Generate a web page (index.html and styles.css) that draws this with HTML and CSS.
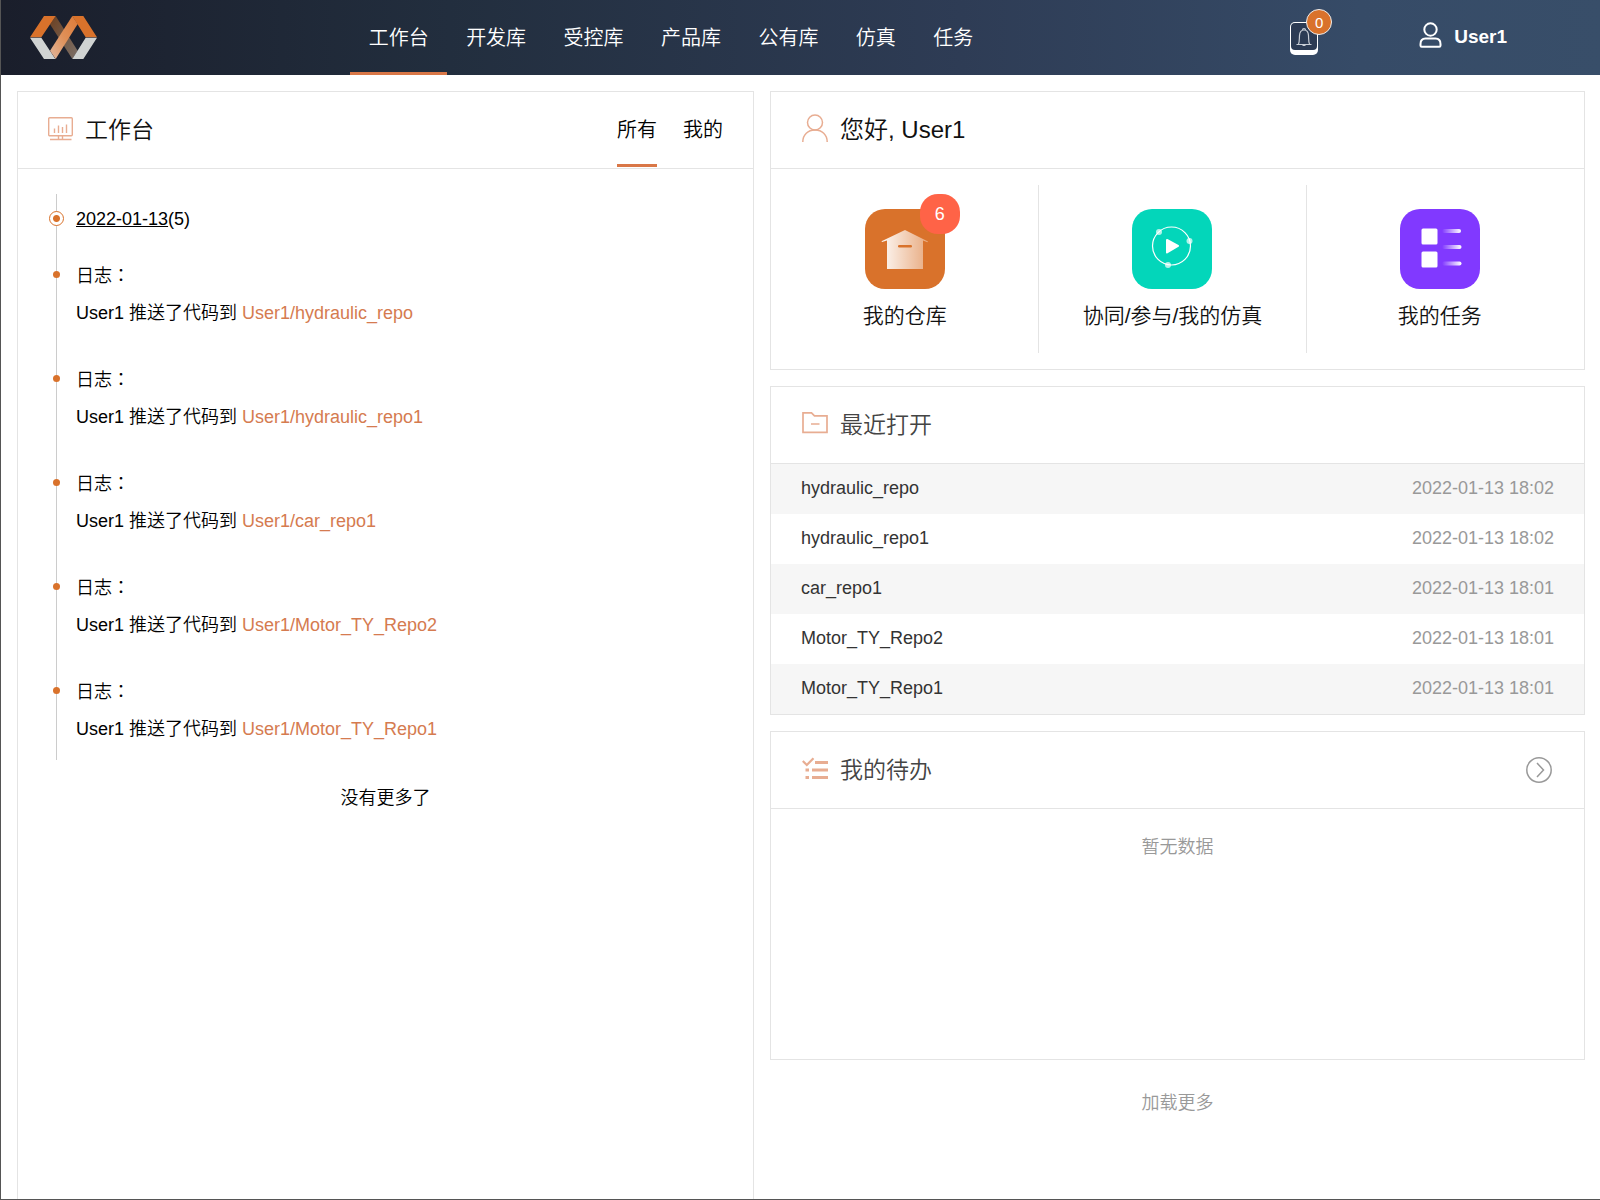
FILE: index.html
```html
<!DOCTYPE html>
<html lang="zh-CN">
<head>
<meta charset="utf-8">
<meta name="viewport" content="width=device-width, initial-scale=1">
<title>工作台</title>
<link rel="stylesheet" href="styles.css">
</head>
<body>
<header class="topbar">
  <a class="logo" href="#" aria-label="首页">
    <svg width="67" height="43" viewBox="90 48 201 129">
      <defs>
        <linearGradient id="band-dark" x1="0" y1="0" x2="1" y2="1"><stop offset="0" stop-color="#6b4022"/><stop offset="1" stop-color="#7c7068"/></linearGradient>
        <linearGradient id="band-light" x1="1" y1="0" x2="0" y2="1"><stop offset="0" stop-color="#dc7a38"/><stop offset=".5" stop-color="#e09058"/><stop offset="1" stop-color="#e0b79e"/></linearGradient>
      </defs>
      <path fill="url(#band-dark)" d="M167 48l66 104-16 25-67-104z"/>
      <path fill="#d9722b" d="M132 48h35l-43 64H90zM217 48h33l41 64h-34z"/>
      <path fill="#d0d3d2" d="M90 113h34l42 64h-34zM257 113h34l-41 64h-33z"/>
      <path fill="url(#band-light)" d="M217 48l16 24-66 105-17-25z"/>
    </svg>
  </a>
  <nav class="nav">
    <a class="nav-item active" href="#">工作台</a>
    <a class="nav-item" href="#">开发库</a>
    <a class="nav-item" href="#">受控库</a>
    <a class="nav-item" href="#">产品库</a>
    <a class="nav-item" href="#">公有库</a>
    <a class="nav-item" href="#">仿真</a>
    <a class="nav-item" href="#">任务</a>
  </nav>
  <div class="tools">
    <button class="bell" type="button" aria-label="通知">
      <svg width="28" height="33" viewBox="0 0 28 33">
        <rect width="28" height="33" rx="5" fill="#fff"/>
        <rect x="1" y="1" width="26" height="27" rx="4" fill="#2c3b54"/>
        <path fill="none" stroke="#c9ced6" stroke-width="1.2" d="M6.500 22.500h15M8.500 22c1-2 .8-5 1-8.500.2-3.500 2-5.500 4.500-5.500s4.300 2 4.500 5.500c.2 3.500 0 6.500 1 8.500M12.500 8c0-1 .5-1.500 1.500-1.500s1.500.5 1.500 1.500M12.500 23.500h3"/>
      </svg>
      <span class="bell-count">0</span>
    </button>
    <a class="user" href="#">
      <svg width="23" height="26" viewBox="0 0 23 26" fill="none" stroke="#fff" stroke-width="2">
        <circle cx="11.500" cy="7.500" r="6.200"/>
        <path d="M6.500 16.500h10c3.500 0 5 2.500 5 5.500v1.500q0 1.200-1.200 1.200H2.700q-1.200 0-1.200-1.200V22c0-3 1.500-5.500 5-5.500z"/>
      </svg>
      <span class="user-name">User1</span>
    </a>
  </div>
</header>

<main class="board">
  <section class="panel feed">
    <header class="panel-head">
      <svg class="head-icon" width="25" height="25" viewBox="0 0 25 25" fill="none" stroke="#e8ad92" stroke-width="1.400">
        <rect x=".7" y="1.700" width="23.600" height="18" rx="1"/>
        <path d="M6.500 12.500v4.500M10.500 9.500v7.500M14.500 11v6M18.500 8.500v8.500M10.500 20v3M14.500 20v3M2 23.500h21.500"/>
      </svg>
      <h2 class="title strong">工作台</h2>
      <div class="tabs">
        <button class="tab active" type="button">所有</button>
        <button class="tab" type="button">我的</button>
      </div>
    </header>
    <div class="timeline">
      <h3 class="day"><a href="#">2022-01-13</a>(5)</h3>
      <ol class="events">
        <li class="event"><p class="kind">日志：</p><p>User1 推送了代码到 <a href="#">User1/hydraulic_repo</a></p></li>
        <li class="event"><p class="kind">日志：</p><p>User1 推送了代码到 <a href="#">User1/hydraulic_repo1</a></p></li>
        <li class="event"><p class="kind">日志：</p><p>User1 推送了代码到 <a href="#">User1/car_repo1</a></p></li>
        <li class="event"><p class="kind">日志：</p><p>User1 推送了代码到 <a href="#">User1/Motor_TY_Repo2</a></p></li>
        <li class="event"><p class="kind">日志：</p><p>User1 推送了代码到 <a href="#">User1/Motor_TY_Repo1</a></p></li>
      </ol>
    </div>
    <p class="feed-end">没有更多了</p>
  </section>

  <div class="side">
    <section class="panel">
      <header class="panel-head">
        <svg class="head-icon" width="26" height="28" viewBox="0 0 26 28" fill="none" stroke="#e8ad92" stroke-width="1.500">
          <circle cx="13" cy="8.500" r="7.500"/>
          <path d="M.8 28C.8 20.500 6 16 13 16s12.200 4.500 12.200 12"/>
        </svg>
        <h2 class="title strong greeting">您好, User1</h2>
      </header>
      <div class="tiles">
        <a class="tile" href="#">
          <span class="tile-art">
            <svg width="80" height="80" viewBox="0 0 80 80">
              <defs><linearGradient id="house" x1="0" x2="1"><stop offset="0" stop-color="#fff" stop-opacity=".95"/><stop offset="1" stop-color="#fff" stop-opacity=".4"/></linearGradient></defs>
              <rect width="80" height="80" rx="20" fill="#d9722b"/>
              <path fill="url(#house)" d="M40 21l23 11.500-.5.800L58 31.500V60H22V31.500l-5 1.500-.5-.8z"/>
              <rect x="33" y="36" width="14" height="2.500" rx="1.200" fill="#d9722b"/>
            </svg>
            <span class="tile-count">6</span>
          </span>
          <span>我的仓库</span>
        </a>
        <a class="tile" href="#">
          <span class="tile-art">
            <svg width="80" height="80" viewBox="0 0 80 80">
              <rect width="80" height="80" rx="20" fill="#03d6ba"/>
              <circle cx="39.500" cy="37" r="19" fill="none" stroke="#fff" stroke-width="1.200"/>
              <g fill="#fff" fill-opacity=".7"><circle cx="27" cy="23" r="3"/><circle cx="57.500" cy="32" r="3"/><circle cx="36" cy="56" r="3"/></g>
              <path fill="#fff" stroke="#fff" stroke-width="2" stroke-linejoin="round" d="M35 31l11 6-11 6.500z"/>
            </svg>
          </span>
          <span>协同/参与/我的仿真</span>
        </a>
        <a class="tile" href="#">
          <span class="tile-art">
            <svg width="80" height="80" viewBox="0 0 80 80">
              <defs><linearGradient id="fade" x1="0" x2="1"><stop offset="0" stop-color="#fff" stop-opacity="0"/><stop offset="1" stop-color="#fff"/></linearGradient></defs>
              <rect width="80" height="80" rx="20" fill="#8139ff"/>
              <g fill="#fff"><rect x="21.500" y="19.500" width="16" height="16" rx="1.500"/><rect x="21.500" y="42.500" width="16" height="16" rx="1.500"/></g>
              <g fill="url(#fade)"><rect x="42" y="20" width="19" height="4" rx="2"/><rect x="42" y="36" width="19.500" height="4" rx="2"/><rect x="42" y="52.500" width="19.500" height="4" rx="2"/></g>
            </svg>
          </span>
          <span>我的任务</span>
        </a>
      </div>
    </section>

    <section class="panel">
      <header class="panel-head">
        <svg class="head-icon" width="26" height="25" viewBox="0 0 26 25" fill="none" stroke="#e8ad92" stroke-width="1.700">
          <path d="M1 1.800h8.500l3 3H25v16.500H1zM9 13h8.500"/>
        </svg>
        <h2 class="title">最近打开</h2>
      </header>
      <table class="recent">
        <tbody>
          <tr><td>hydraulic_repo</td><td class="when">2022-01-13 18:02</td></tr>
          <tr><td>hydraulic_repo1</td><td class="when">2022-01-13 18:02</td></tr>
          <tr><td>car_repo1</td><td class="when">2022-01-13 18:01</td></tr>
          <tr><td>Motor_TY_Repo2</td><td class="when">2022-01-13 18:01</td></tr>
          <tr><td>Motor_TY_Repo1</td><td class="when">2022-01-13 18:01</td></tr>
        </tbody>
      </table>
    </section>

    <section class="panel">
      <header class="panel-head">
        <svg class="head-icon" width="26" height="25" viewBox="0 0 26 25" fill="none" stroke="#e8ad92" stroke-width="3">
          <path d="M13 6.500h13M10 14h16M10 21.500h16M3.500 14h3.500M3.500 21.500h3.500"/>
          <path stroke-width="2.200" d="M.8 5l4 4L11.500 2.200"/>
        </svg>
        <h2 class="title">我的待办</h2>
        <button class="more" type="button" aria-label="查看全部">
          <svg width="26" height="26" viewBox="0 0 26 26" fill="none" stroke="#999" stroke-width="1.500">
            <circle cx="13" cy="13" r="12.200"/><path d="M11 6l6.500 7-6.500 7"/>
          </svg>
        </button>
      </header>
      <p class="empty">暂无数据</p>
    </section>
    <button class="load" type="button">加载更多</button>
  </div>
</main>
</body>
</html>
```
FILE: styles.css
```css
* {
  box-sizing: border-box;
}

body {
  display: flex;
  flex-direction: column;
  min-height: 100vh;
  margin: 0;
  border-left: 1px solid #555;
  border-bottom: 1px solid #555;
  background: #fff;
  color: #000;
  font: 350 18px/36px "Liberation Sans", "Noto Sans CJK SC", sans-serif;
}

a {
  color: inherit;
  text-decoration: none;
}

button {
  padding: 0;
  border: 0;
  background: none;
  color: inherit;
  font: inherit;
  cursor: pointer;
}

svg {
  display: block;
}

h2, h3, p, ol {
  margin: 0;
  padding: 0;
  font-weight: inherit;
}

/* Top bar */
.topbar {
  display: flex;
  align-items: center;
  height: 75px;
  padding: 0 93px 0 29px;
  background: linear-gradient(to right, #1a1e2b, #222e3e 28%, #2e3c55 60%, #364b67 85%, #384e69);
  color: #fff;
}

.logo {
  flex: 0 0 320px;
}

.nav {
  display: flex;
  align-self: stretch;
  width: 642px;
}

.nav-item {
  flex: 1 1 auto;
  border-bottom: 3px solid transparent;
  font-size: 20px;
  line-height: 76px;
  text-align: center;
}

.nav-item.active {
  border-color: #d97747;
}

.tools {
  display: flex;
  align-items: center;
  gap: 101px;
  margin-left: auto;
  padding-top: 2px;
}

.bell {
  position: relative;
}

.bell-count {
  position: absolute;
  top: -13px;
  left: 16px;
  width: 26px;
  height: 26px;
  border: 1px solid #eee;
  border-radius: 50%;
  background: #d9722b;
  font-size: 15px;
  line-height: 25px;
}

.user {
  display: flex;
  gap: 12px;
  align-items: center;
  padding-bottom: 8px;
}

.user-name {
  padding-top: 4px;
  font-size: 19px;
  font-weight: 700;
  line-height: 26px;
}

/* Page grid */
.board {
  display: grid;
  flex: 1;
  grid-template-columns: 737fr 815fr;
  gap: 16px;
  padding: 16px 15px 0 16px;
}

.panel {
  border: 1px solid #e4e4e4;
}

.panel-head {
  display: flex;
  align-items: center;
  height: 77px;
  padding: 0 30px;
  border-bottom: 1px solid #e4e4e4;
}

.head-icon {
  margin: 0 12px 4px 0;
}

.title {
  padding-bottom: 1px;
  color: #444;
  font-size: 23px;
}

.title.strong {
  color: #111;
}

.title.greeting {
  font-size: 24px;
}

/* Activity feed */
.feed {
  border-bottom: 0;
}

.tabs {
  display: flex;
  gap: 26px;
  align-self: stretch;
  margin-left: auto;
  padding-bottom: 1px;
}

.tab {
  padding-top: 3px;
  border-bottom: 3px solid transparent;
  font-size: 20px;
}

.tab.active {
  border-color: #d97747;
}

.timeline {
  margin: 25px 30px 0 38px;
  padding: 7px 0 12px 19px;
  border-left: 1px solid #ccc;
}

.day {
  position: relative;
  margin-bottom: 21px;
  font-size: 18px;
}

.day a {
  text-decoration: underline;
}

.day::before {
  content: "";
  position: absolute;
  top: 10px;
  left: -27px;
  width: 13px;
  height: 13px;
  border: 1px solid #d9722b;
  border-radius: 50%;
  background: radial-gradient(circle, #d9722b 3px, #fff 4px);
}

.events {
  display: grid;
  gap: 30px;
  list-style: none;
}

.event {
  position: relative;
  line-height: 37px;
}

.event::before {
  content: "";
  position: absolute;
  top: 13px;
  left: -23px;
  width: 7px;
  height: 7px;
  border-radius: 50%;
  background: #d9722b;
}

.event a {
  color: #d57b50;
}

/* Centres the full-width colon in its cell */
.kind {
  font-family: "Liberation Sans", "Noto Sans CJK JP", sans-serif;
  font-feature-settings: "locl" 0;
}

.feed-end {
  margin-top: 20px;
  text-align: center;
}

/* Right column */
.side {
  display: flex;
  flex-direction: column;
  gap: 16px;
}

.side .panel-head {
  padding: 0 32px 0 31px;
}

.tiles {
  display: grid;
  grid-template-columns: repeat(3, 1fr);
  padding: 16px 11px 16px 0;
}

.tile {
  display: flex;
  flex-direction: column;
  gap: 9px;
  align-items: center;
  height: 168px;
  padding-top: 24px;
  color: #111;
  font-size: 21px;
}

.tile + .tile {
  border-left: 1px solid #e4e4e4;
}

.tile-art {
  position: relative;
}

.tile-count {
  position: absolute;
  top: -15px;
  left: 55px;
  width: 40px;
  height: 40px;
  border-radius: 18px;
  background: #ff6347;
  color: #fff;
  font-size: 18px;
  line-height: 40px;
  text-align: center;
}

.recent {
  width: 100%;
  border-collapse: collapse;
  color: #333;
}

.recent tr:nth-child(odd) {
  background: #f6f6f6;
}

.recent td {
  height: 50px;
  padding: 0 30px 2px;
}

.recent .when {
  color: #999;
  text-align: right;
}

.more {
  margin-left: auto;
}

.empty {
  min-height: 250px;
  padding-top: 20px;
  color: #999;
  text-align: center;
}

.load {
  align-self: center;
  margin-top: 9px;
  color: #999;
}
```
